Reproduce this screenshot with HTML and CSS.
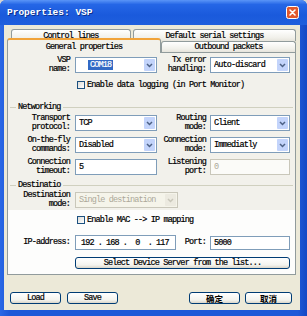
FILE: index.html
```html
<!DOCTYPE html>
<html lang="en">

<head>
    <meta charset="utf-8">
    <title>Properties: VSP</title>
    <link rel="stylesheet" href="styles.css">
</head>

<body>
    <div class="window">
        <!--TITLE BAR-->
        <div class="titlebar">
            <span class="title">Properties: VSP</span>
            <span class="close">
                <svg width="13" height="13" viewBox="0 0 13 13">
                    <rect x="0.5" y="0.5" width="12" height="12" rx="2" fill="#E1582D" stroke="#fff" />
                    <path d="M4 4 L9 9 M9 4 L4 9" stroke="#fff" stroke-width="1.6" stroke-linecap="round" />
                </svg>
            </span>
        </div>

        <div class="body">
            <!--TABS-->
            <div class="tabrow back">
                <div class="tab t-control">Control lines</div>
                <div class="tab t-default">Default serial settings</div>
            </div>
            <div class="tabrow front">
                <div class="tab active">General properties</div>
                <div class="tab t-outbound">Outbound packets</div>
            </div>

            <!--TAB PANEL-->
            <div class="panel">
                <div class="grid block-top">
                    <div class="lbl">VSP<br>name:</div>
                    <div class="combo"><span class="val"><span class="sel">COM18</span></span><span class="arrow"></span></div>
                    <div class="lbl r">Tx error<br>handling:</div>
                    <div class="combo"><span class="val">Auto-discard</span><span class="arrow"></span></div>
                    <label class="check"><span class="box"></span>Enable data logging (in Port Monitor)</label>
                </div>

                <div class="group">Networking</div>

                <div class="grid block-net">
                    <div class="lbl">Transport<br>protocol:</div>
                    <div class="combo"><span class="val">TCP</span><span class="arrow"></span></div>
                    <div class="lbl r">Routing<br>mode:</div>
                    <div class="combo"><span class="val">Client</span><span class="arrow"></span></div>

                    <div class="lbl">On-the-fly<br>commands:</div>
                    <div class="combo"><span class="val">Disabled</span><span class="arrow"></span></div>
                    <div class="lbl r">Connection<br>mode:</div>
                    <div class="combo"><span class="val">Immediatly</span><span class="arrow"></span></div>

                    <div class="lbl">Connection<br>timeout:</div>
                    <div class="field">5</div>
                    <div class="lbl r">Listening<br>port:</div>
                    <div class="field off">0</div>
                </div>

                <div class="group">Destinatio</div>

                <div class="grid block-dest">
                    <div class="lbl">Destination<br>mode:</div>
                    <div class="combo off wide"><span class="val">Single destination</span><span class="arrow"></span></div>
                </div>

                <div class="dest-area">
                    <div class="grid">
                        <label class="check"><span class="box"></span>Enable MAC --&gt; IP mapping</label>
                    </div>
                    <div class="grid ip-row">
                        <div class="lbl">IP-address:</div>
                        <div class="ipbox">
                            <span class="oct">192</span><span class="dot">.</span>
                            <span class="oct">168</span><span class="dot">.</span>
                            <span class="oct">0</span><span class="dot">.</span>
                            <span class="oct">117</span>
                        </div>
                        <div class="lbl r">Port:</div>
                        <div class="field">5000</div>
                    </div>
                    <div class="grid btn-row">
                        <button class="btn wide">Select Device Server from the list...</button>
                    </div>
                </div>
            </div>

            <!--BOTTOM BUTTONS-->
            <div class="footer">
                <button class="btn">Load</button>
                <button class="btn">Save</button>
                <span class="spacer"></span>
                <button class="btn cn">确定</button>
                <button class="btn cn cancel">取消</button>
            </div>
        </div>
    </div>
</body>

</html>
```

FILE: styles.css
```css
/*GENERELT*/
* {
    margin: 0;
    padding: 0;
    box-sizing: border-box;
}

html {
    background: #d4d4d4;
}

body {
    margin: 0;
    width: 307px;
    height: 316px;
    overflow: hidden;
    font-family: "Liberation Mono", monospace;
    font-size: 8.5px;
    letter-spacing: -0.85px;
    color: #000;
    -webkit-text-stroke: 0.2px #000;
}

/*WINDOW FRAME*/
.window {
    width: 307px;
    height: 316px;
    display: flex;
    flex-direction: column;
    background: linear-gradient(90deg, #2a68e6, #1d58d8 3%, #1d58d8 97%, #1447c4);
    border-radius: 6px 6px 0 0;
}

.titlebar {
    height: 25px;
    flex: none;
    display: flex;
    align-items: center;
    justify-content: space-between;
    padding: 0 8px 0 7px;
    background: linear-gradient(#5a95f7, #2566e6 18%, #1a5adc 60%, #1f5fdd);
    border-radius: 6px 6px 0 0;
}

.title {
    color: #fff;
    font-weight: bold;
    font-size: 9.5px;
    letter-spacing: 0;
    -webkit-text-stroke: 0;
    text-shadow: 1px 1px #0b2f8c;
}

.close {
    display: flex;
}

.body {
    flex: 1;
    margin: 0 7px 6px 4px;
    padding: 4px 4px 0 3px;
    background: #ece9d8;
    display: flex;
    flex-direction: column;
}

/*TABS*/
.tabrow {
    display: flex;
    flex: none;
}

.tabrow.back {
    height: 12px;
    padding-left: 4px;
}

.tabrow.front {
    height: 14px;
    margin-top: -3px;
    align-items: flex-end;
}

.tab {
    height: 100%;
    border: 1px solid #919b9c;
    border-bottom: none;
    border-radius: 3px 3px 0 0;
    background: linear-gradient(#ffffff, #f1f0ea 70%, #e6e4dc);
    display: flex;
    align-items: center;
    justify-content: center;
    white-space: nowrap;
}

.t-control {
    width: 120px;
}

.t-default {
    width: 163px;
    margin-left: 2px;
}

.t-outbound {
    width: 135px;
    height: 11px;
}

.tab.active {
    width: 154px;
    height: 15px;
    margin-bottom: -1px;
    position: relative;
    z-index: 1;
    background: #f2f1eb;
    border-top: 2px solid #f1a33a;
}

/*PANEL*/
.panel {
    flex: none;
    height: 223px;
    border: 1px solid #919b9c;
    background: #f2f1eb;
    padding-top: 4px;
    display: flex;
    flex-direction: column;
}

.grid {
    display: grid;
    grid-template-columns: 67px 82px 53px 80px;
    align-items: center;
}

.block-top {
    grid-template-rows: 16px 12px;
    row-gap: 6px;
}

.block-net {
    margin-top: 3px;
    grid-template-rows: 16px 16px 16px;
    row-gap: 6px;
}

.block-dest {
    margin-top: 2px;
    grid-template-rows: 16px;
}

.lbl {
    text-align: right;
    padding-right: 5px;
    line-height: 9.5px;
    white-space: nowrap;
}

.lbl.r {
    padding-right: 4px;
}

/*GROUP HEADERS*/
.group {
    height: 10px;
    margin-top: 11px;
    padding-left: 2px;
    margin-right: 2px;
    display: flex;
    align-items: center;
    gap: 2px;
}

.group + .grid.block-dest {
    margin-top: 2px;
}

.block-net + .group {
    margin-top: 5px;
}

.group::before {
    content: "";
    width: 6px;
    height: 1px;
    background: #d0d0bf;
}

.group::after {
    content: "";
    flex: 1;
    height: 1px;
    background: #d0d0bf;
}

/*CONTROLS*/
.combo {
    height: 16px;
    border: 1px solid #7f9db9;
    background: #fff;
    display: flex;
    align-items: center;
    padding: 0 1px 0 3px;
}

.combo .val {
    flex: 1;
    white-space: nowrap;
    overflow: hidden;
}

.combo .sel {
    margin-left: 9px;
    padding: 1px 2px;
    background: #316ac5;
    color: #fff;
    -webkit-text-stroke: 0.2px #fff;
}

.combo .arrow {
    width: 11px;
    height: 12px;
    border-radius: 1px;
    background: #c3d4fb url("data:image/svg+xml,%3Csvg xmlns='http://www.w3.org/2000/svg' width='7' height='5'%3E%3Cpath d='M1 1 L3.5 3.5 L6 1' fill='none' stroke='%234d6185' stroke-width='1.5'/%3E%3C/svg%3E") no-repeat center;
}

.combo.off {
    border-color: #c9c7ba;
    background: #f5f4ea;
    color: #aca899;
    -webkit-text-stroke: 0;
}

.combo.off .arrow {
    background: #eceae0 url("data:image/svg+xml,%3Csvg xmlns='http://www.w3.org/2000/svg' width='7' height='5'%3E%3Cpath d='M1 1 L3.5 3.5 L6 1' fill='none' stroke='%23c9c7ba' stroke-width='1.5'/%3E%3C/svg%3E") no-repeat center;
}

.combo.wide {
    grid-column: 2 / 4;
    width: 103px;
}

.field {
    height: 16px;
    border: 1px solid #7f9db9;
    background: #fff;
    padding-left: 3px;
    display: flex;
    align-items: center;
}

.field.off {
    border-color: #c9c7ba;
    background: #fbfbf8;
    color: #aca899;
    -webkit-text-stroke: 0;
}

.check {
    grid-column: 2 / 5;
    display: flex;
    align-items: center;
    gap: 2px;
    padding-left: 2px;
    white-space: nowrap;
}

.box {
    width: 8px;
    height: 8px;
    border: 1px solid #1c5180;
    background: linear-gradient(135deg, #dcdcd7, #fff);
}

/*DESTINATION AREA*/
.dest-area {
    flex: 1;
    margin-top: 2px;
    padding-top: 4px;
    background: #fdfdfc;
}

.dest-area .grid:first-child {
    grid-template-rows: 12px;
}

.ip-row {
    margin-top: 9px;
    grid-template-columns: 67px 101px 34px 80px;
}

.ipbox {
    height: 15px;
    border: 1px solid #7f9db9;
    background: #fff;
    padding-left: 3px;
    display: flex;
    align-items: center;
}

.ipbox .oct {
    width: 17px;
    text-align: center;
}

.ipbox .dot {
    width: 8px;
    text-align: center;
}

.ip-row .field {
    height: 14px;
}

.btn-row {
    margin-top: 7px;
}

/*BUTTONS*/
.btn {
    height: 12px;
    border: 1px solid #003c74;
    border-radius: 3px;
    background: linear-gradient(#ffffff, #f3f3ee 70%, #d9d5c9);
    font-family: "Liberation Mono", monospace;
    font-size: 8.5px;
    letter-spacing: -0.85px;
    color: #000;
    -webkit-text-stroke: 0.2px #000;
    display: flex;
    align-items: center;
    justify-content: center;
    white-space: nowrap;
}

.btn.wide {
    grid-column: 2 / 5;
}

.footer {
    flex: none;
    margin-top: 17px;
    padding: 0 4px 0 3px;
    display: flex;
    gap: 6px;
}

.footer .btn {
    width: 51px;
}

.spacer {
    flex: 1;
}

.btn.cn {
    font-family: "Noto Sans CJK SC", sans-serif;
    font-size: 8.5px;
    font-weight: bold;
    letter-spacing: 0;
    -webkit-text-stroke: 0;
}

.footer .btn.cancel {
    width: 47px;
    margin-left: -1px;
}
```
